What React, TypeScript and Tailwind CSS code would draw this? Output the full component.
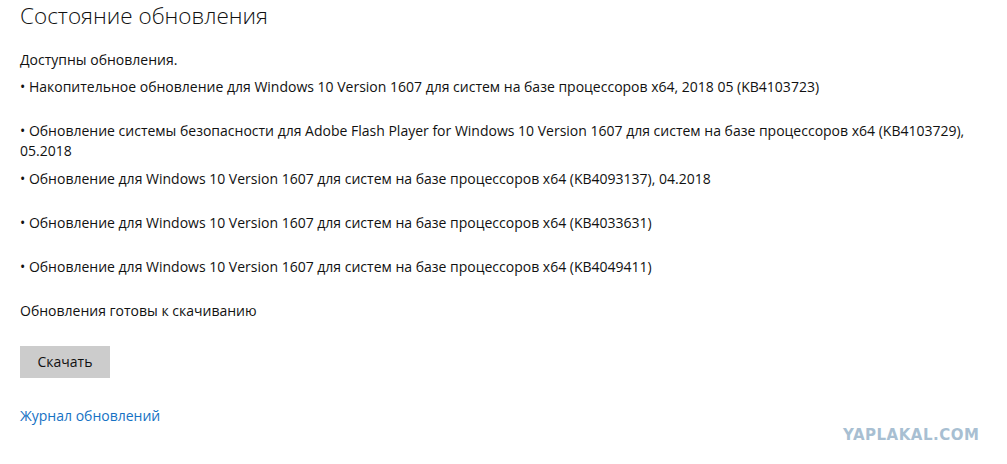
const updates: string[][] = [
  ['• Накопительное обновление для Windows 10 Version 1607 для систем на базе процессоров x64, 2018 05 (KB4103723)'],
  [
    '• Обновление системы безопасности для Adobe Flash Player for Windows 10 Version 1607 для систем на базе процессоров x64 (KB4103729),',
    '05.2018',
  ],
  ['• Обновление для Windows 10 Version 1607 для систем на базе процессоров x64 (KB4093137), 04.2018'],
  ['• Обновление для Windows 10 Version 1607 для систем на базе процессоров x64 (KB4033631)'],
  ['• Обновление для Windows 10 Version 1607 для систем на базе процессоров x64 (KB4049411)'],
];

const App = () => {
  return (
    <div
      className="relative h-[464px] w-[1007px] overflow-hidden whitespace-nowrap bg-white pl-5 text-[14px] leading-5 text-[#111]"
      style={{ fontFamily: '"Open Sans", "Noto Sans", sans-serif' }}
    >
      <h1 className="text-[22.5px] font-light leading-[32px] text-[#111]">Состояние обновления</h1>

      <p className="mt-[18px]">Доступны обновления.</p>

      <div className="mt-[7px]">
        {updates.map((lines, i) => (
          <div key={i} className="mb-2 min-h-[36px]">
            {lines.map((line, j) => (
              <div key={j}>{line}</div>
            ))}
          </div>
        ))}
      </div>

      <p>Обновления готовы к скачиванию</p>

      <button className="mt-[25px] h-8 w-[90px] bg-[#cccccc] text-[14px] text-[#111]">Скачать</button>

      <div className="mt-[28px]">
        <a className="text-[#1672c4]">Журнал обновлений</a>
      </div>

      {/* watermark */}
      <div
        className="absolute left-[843px] top-[425px] text-[15px] font-bold tracking-[0.5px] text-[#a8bfd2]"
        style={{ fontFamily: '"DejaVu Sans", sans-serif' }}
      >
        YAPLAKAL.COM
      </div>
    </div>
  );
};

export default App;
